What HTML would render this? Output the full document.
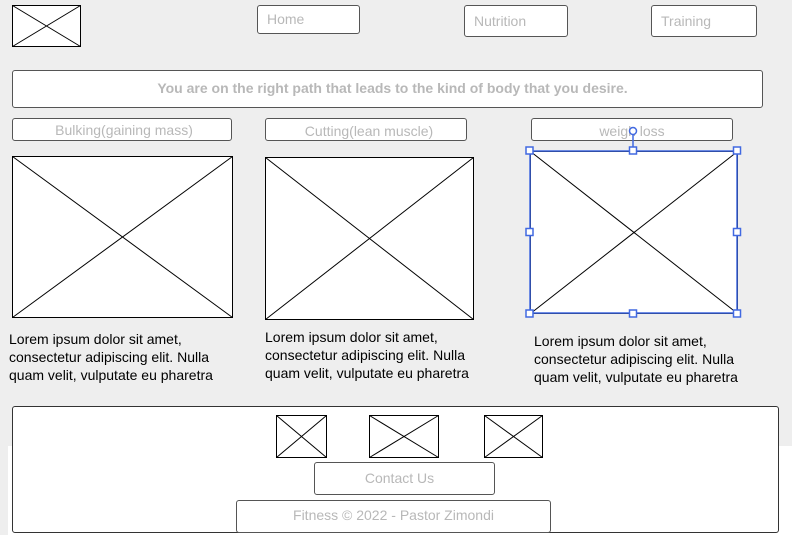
<!DOCTYPE html><html><head><style>
body{margin:0;width:792px;height:535px;background:#eeeeee;position:relative;overflow:hidden;font-family:"Liberation Sans",Arial,sans-serif}
.a{position:absolute;box-sizing:border-box}
.btn{position:absolute;box-sizing:border-box;background:#fff;border:1px solid #555;border-radius:3px;color:#b8b8b8;font-size:14px;text-align:center}
.t{position:absolute;font-size:14px;line-height:18px;color:#000;white-space:nowrap}
svg{position:absolute;left:0;top:0}
</style></head><body>
<div class="a" style="left:0;top:446px;width:792px;height:89px;background:#fff"></div>
<div class="a" style="left:0;top:446px;width:8px;height:89px;background:#eee"></div>
<div class="a" style="left:12px;top:406px;width:767px;height:127px;background:#fff;border:1px solid #333;border-radius:3px"></div>
<div class="btn" style="left:257px;top:5px;width:103px;height:29px;line-height:26px;text-align:left;padding-left:9px">Home</div>
<div class="btn" style="left:464px;top:5px;width:104px;height:32px;line-height:30px;text-align:left;padding-left:9px">Nutrition</div>
<div class="btn" style="left:651px;top:5px;width:106px;height:32px;line-height:30px;text-align:left;padding-left:9px">Training</div>
<div class="btn" style="left:12px;top:70px;width:751px;height:38px;line-height:34px;font-weight:bold;font-size:14px;padding-left:10px">You are on the right path that leads to the kind of body that you desire.</div>
<div class="btn" style="left:12px;top:118px;width:220px;height:23px;line-height:23px;padding-left:4px">Bulking(gaining mass)</div>
<div class="btn" style="left:265px;top:118px;width:202px;height:23px;line-height:24px;padding-left:6px">Cutting(lean muscle)</div>
<div class="btn" style="left:531px;top:118px;width:202px;height:23px;line-height:24px">weigh loss</div>
<div class="btn" style="left:314px;top:462px;width:181px;height:33px;line-height:31px;padding-right:10px">Contact Us</div>
<div class="btn" style="left:236px;top:500px;width:315px;height:33px;line-height:28px">Fitness © 2022 - Pastor Zimondi</div>
<div class="t" style="left:9px;top:330px">Lorem ipsum dolor sit amet,<br>consectetur adipiscing elit. Nulla<br>quam velit, vulputate eu pharetra</div>
<div class="t" style="left:265px;top:328px">Lorem ipsum dolor sit amet,<br>consectetur adipiscing elit. Nulla<br>quam velit, vulputate eu pharetra</div>
<div class="t" style="left:534px;top:332px">Lorem ipsum dolor sit amet,<br>consectetur adipiscing elit. Nulla<br>quam velit, vulputate eu pharetra</div>
<svg width="792" height="535" fill="#fff" stroke="#000" stroke-width="1">
<g>
<rect x="12.5" y="5.5" width="68" height="41"/><path d="M12.5 5.5L80.5 46.5M80.5 5.5L12.5 46.5"/>
<rect x="12.5" y="156.5" width="220" height="161"/><path d="M12.5 156.5L232.5 317.5M232.5 156.5L12.5 317.5"/>
<rect x="265.5" y="157.5" width="208" height="162"/><path d="M265.5 157.5L473.5 319.5M473.5 157.5L265.5 319.5"/>
<rect x="530.5" y="151.5" width="207" height="162"/><path d="M530.5 151.5L737.5 313.5M737.5 151.5L530.5 313.5"/>
<rect x="276.5" y="415.5" width="50" height="42"/><path d="M276.5 415.5L326.5 457.5M326.5 415.5L276.5 457.5"/>
<rect x="369.5" y="415.5" width="69" height="42"/><path d="M369.5 415.5L438.5 457.5M438.5 415.5L369.5 457.5"/>
<rect x="484.5" y="415.5" width="58" height="42"/><path d="M484.5 415.5L542.5 457.5M542.5 415.5L484.5 457.5"/>
</g>
<g stroke="#4169e1" stroke-width="1.5">
<rect x="530" y="151" width="207" height="162" fill="none"/>
<line x1="633" y1="131" x2="633" y2="147"/>
<circle cx="633" cy="131" r="3.5"/>
<rect x="526" y="147" width="7" height="7"/><rect x="629.5" y="147" width="7" height="7"/><rect x="733.5" y="147" width="7" height="7"/>
<rect x="526" y="228.5" width="7" height="7"/><rect x="733.5" y="228.5" width="7" height="7"/>
<rect x="526" y="310" width="7" height="7"/><rect x="629.5" y="310" width="7" height="7"/><rect x="733.5" y="310" width="7" height="7"/>
</g>
</svg>
</body></html>
